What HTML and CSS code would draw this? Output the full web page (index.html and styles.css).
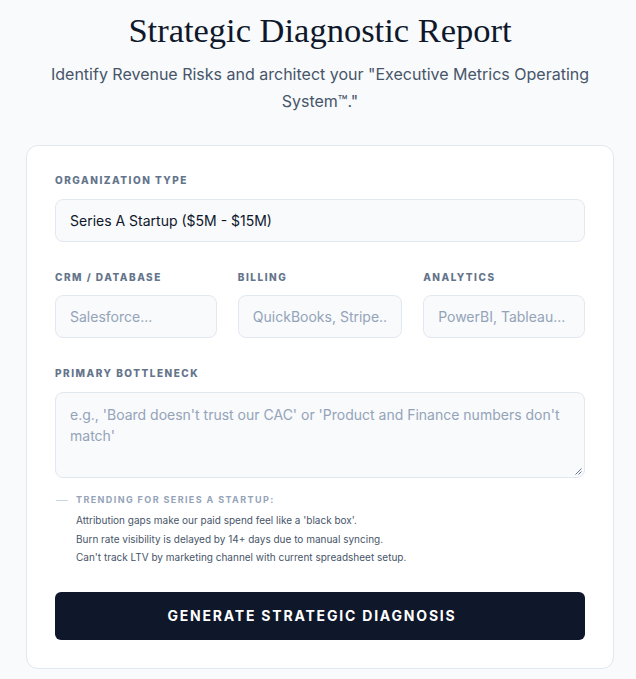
FILE: index.html
```html
<!DOCTYPE html>
<html>
<head>
<meta charset="utf-8">
<link rel="stylesheet" href="styles.css">
</head>
<body>
<div class="page">
  <header class="hero">
    <h1 class="title">Strategic Diagnostic Report</h1>
    <p class="subtitle">Identify Revenue Risks and architect your "Executive Metrics Operating System™."</p>
  </header>
  <form class="card">
    <div class="field">
      <label class="label">Organization Type</label>
      <div class="input value">Series A Startup ($5M - $15M)</div>
    </div>
    <div class="row">
      <div class="field">
        <label class="label">CRM / Database</label>
        <div class="input placeholder">Salesforce...</div>
      </div>
      <div class="field">
        <label class="label">Billing</label>
        <div class="input placeholder">QuickBooks, Stripe..</div>
      </div>
      <div class="field">
        <label class="label">Analytics</label>
        <div class="input placeholder">PowerBI, Tableau...</div>
      </div>
    </div>
    <div class="field">
      <label class="label">Primary Bottleneck</label>
      <div class="textarea placeholder">e.g., 'Board doesn't trust our CAC' or 'Product and Finance numbers don't match'
        <svg class="grip" width="7" height="7" viewBox="0 0 7 7"><path d="M6.5 0.5 L0.5 6.5 M6.5 3.5 L3.5 6.5" stroke="#64748b" stroke-width="1"/></svg>
      </div>
    </div>
    <div class="trending">
      <div class="trend-head"><span class="trend-line"></span><span class="trend-title">Trending for Series A Startup:</span></div>
      <ul class="trend-list">
        <li>Attribution gaps make our paid spend feel like a 'black box'.</li>
        <li>Burn rate visibility is delayed by 14+ days due to manual syncing.</li>
        <li>Can't track LTV by marketing channel with current spreadsheet setup.</li>
      </ul>
    </div>
    <button type="button" class="btn">Generate Strategic Diagnosis</button>
  </form>
</div>
</body>
</html>
```
FILE: styles.css
```css
* { box-sizing: border-box; }
html, body { margin: 0; padding: 0; }
body {
  background: #f8fafc;
  font-family: Inter, "Noto Sans", sans-serif;
  color: #0f172a;
}
.page {
  padding: 0 22px 0 26px;
}
.hero {
  text-align: center;
  padding-top: 8px;
}
.title {
  margin: 0;
  font-family: "Liberation Serif", serif;
  font-weight: 400;
  font-size: 34.5px;
  line-height: 44px;
  color: #0f172a;
}
.subtitle {
  margin: 9px auto 0;
  max-width: 560px;
  font-size: 16px;
  line-height: 27px;
  color: #475569;
}
.card {
  margin-top: 30px;
  background: #fff;
  border: 1px solid #e2e8f0;
  border-radius: 12px;
  padding: 27px 28px 28px;
  display: flex;
  flex-direction: column;
}
.field {
  display: flex;
  flex-direction: column;
}
.label {
  font-size: 10px;
  font-weight: 800;
  letter-spacing: 1.5px;
  text-transform: uppercase;
  color: #64748b;
  line-height: 14px;
  margin-bottom: 12px;
}
.row .label { margin-bottom: 11px; }
.input {
  height: 43px;
  background: #f8fafc;
  border: 1px solid #e2e8f0;
  border-radius: 8px;
  padding: 0 14px;
  display: flex;
  align-items: center;
  font-size: 14px;
  white-space: nowrap;
  overflow: hidden;
}
.value { color: #0f172a; }
.placeholder { color: #94a3b8; }
.row {
  display: grid;
  grid-template-columns: 1fr 1fr 1fr;
  gap: 21px;
  margin-top: 28px;
}
.row + .field { margin-top: 28px; }
.textarea {
  position: relative;
  height: 86px;
  background: #f8fafc;
  border: 1px solid #e2e8f0;
  border-radius: 8px;
  padding: 11px 14px;
  font-size: 14px;
  line-height: 21px;
}
.grip {
  position: absolute;
  right: 2px;
  bottom: 2px;
}
.trending {
  margin-top: 16px;
}
.trend-head {
  display: flex;
  align-items: center;
  gap: 8px;
}
.trend-line {
  width: 12px;
  height: 1px;
  background: #cbd5e1;
  margin-left: 1px;
}
.trend-title {
  font-size: 9px;
  font-weight: 700;
  letter-spacing: 1.4px;
  text-transform: uppercase;
  color: #94a3b8;
  line-height: 12px;
}
.trend-list {
  list-style: none;
  margin: 5px 0 0;
  padding: 0 0 0 21px;
}
.trend-list li {
  font-size: 10px;
  line-height: 18.5px;
  color: #475569;
}
.btn {
  margin-top: 25px;
  height: 48px;
  border: none;
  border-radius: 6px;
  background: #0f172a;
  color: #fff;
  font-family: Inter, "Noto Sans", sans-serif;
  font-size: 14px;
  font-weight: 700;
  letter-spacing: 1.8px;
  text-transform: uppercase;
  padding: 0 16px 0 0;
}
```
